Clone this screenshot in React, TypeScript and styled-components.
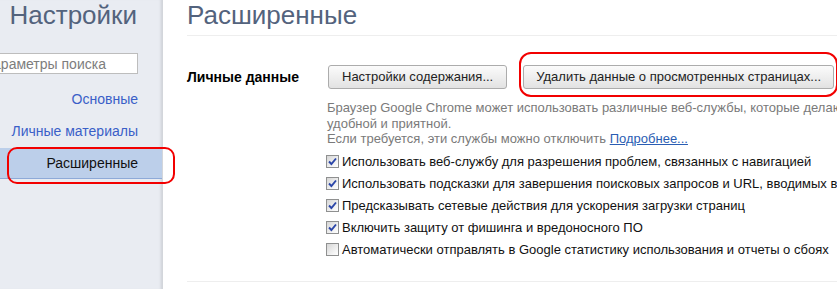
import React from "react";
import styled, { createGlobalStyle } from "styled-components";

const Global = createGlobalStyle`
  html, body { margin: 0; padding: 0; background: #fff; }
  body { font-family: "Liberation Sans", Arial, sans-serif; font-size: 13px; color: #000; }
  * { box-sizing: border-box; }
`;

const Page = styled.div`
  display: flex;
  width: 837px;
  height: 289px;
  overflow: hidden;
  position: relative;
`;

const Sidebar = styled.div`
  flex: 0 0 163px;
  background: #e9ecf2;
  border-right: 1px solid #d3d6db;
  box-shadow: inset -3px 0 3px -2px rgba(0, 0, 0, 0.12);
  text-align: right;
  position: relative;
  z-index: 2;
`;

const SideTitle = styled.h1`
  margin: 0;
  padding-right: 25px;
  font-weight: normal;
  font-size: 26px;
  line-height: 30px;
  color: #53637d;
`;

const SearchBox = styled.input`
  display: block;
  margin: 23px 0 0 -21px;
  width: 159px;
  height: 21px;
  border: 1px solid #bdbdbd;
  background: #fff;
  padding: 0 3px;
  font-family: "Liberation Sans", Arial, sans-serif;
  font-size: 14px;
  outline: none;
  &::placeholder { color: #7d7d7d; }
`;

const Nav = styled.div`
  margin-top: 10px;
`;

const NavItem = styled.div<{ $active?: boolean }>`
  position: relative;
  height: 31px;
  line-height: 30px;
  margin-bottom: 1px;
  padding-right: 24px;
  font-size: 14px;
  color: ${(p) => (p.$active ? "#111" : "#3a5fc8")};
  background: ${(p) => (p.$active ? "#bccfea" : "transparent")};
  border-bottom: 1px solid ${(p) => (p.$active ? "#8eaad8" : "transparent")};
`;

const Ring = styled.div<{ $r: number }>`
  position: absolute;
  border: 2px solid #f20000;
  border-radius: ${(p) => p.$r}px;
  pointer-events: none;
  z-index: 3;
`;

const SideRing = styled(Ring)`
  left: 7px;
  top: -1px;
  width: 168px;
  height: 37px;
`;

const Main = styled.div`
  flex: 1;
  padding-left: 24px;
  min-width: 0;
`;

const Header = styled.h2`
  margin: 0;
  height: 36px;
  font-weight: normal;
  font-size: 26px;
  line-height: 30px;
  color: #53637d;
  border-bottom: 1px solid #eeeeee;
`;

const Section = styled.div`
  display: flex;
  align-items: flex-start;
  padding-top: 29px;
  padding-bottom: 20px;
  border-bottom: 1px solid #eeeeee;
`;

const Label = styled.div`
  flex: 0 0 141px;
  font-weight: bold;
  font-size: 14px;
  line-height: 24px;
`;

const Body = styled.div`
  flex: 1;
  min-width: 0;
`;

const Buttons = styled.div`
  display: flex;
  gap: 16px;
`;

const BtnWrap = styled.div`
  position: relative;
`;

const Button = styled.button<{ $pad: number }>`
  height: 24px;
  padding: 0 ${(p) => p.$pad}px;
  border: 1px solid #acacac;
  border-radius: 3px;
  background: linear-gradient(#fbfbfb, #ececec 60%, #e2e2e2);
  font-family: "Liberation Sans", Arial, sans-serif;
  font-size: 13px;
  color: #222;
  white-space: nowrap;
  line-height: 22px;
`;

const BtnRing = styled(Ring)`
  left: -4px;
  right: -4px;
  top: -13px;
  bottom: -8px;
`;

const Desc = styled.div`
  margin-top: 11px;
  margin-left: -1px;
  color: #7a7a7a;
  line-height: 15.5px;
  white-space: nowrap;
`;

const Link = styled.a`
  color: #2a5db3;
  text-decoration: underline;
`;

const Options = styled.div`
  margin-top: 4px;
  margin-left: -2px;
`;

const Option = styled.label`
  display: flex;
  align-items: center;
  height: 22px;
  white-space: nowrap;
  color: #111;
`;

const Box = styled.span`
  flex: 0 0 13px;
  width: 13px;
  height: 13px;
  margin-right: 3px;
  border: 1px solid #8f9090;
  background: linear-gradient(135deg, #d6d6d6, #f4f4f4 70%, #fff);
  display: inline-flex;
  align-items: center;
  justify-content: center;
`;

const Check = () => (
  <svg width="9" height="9" viewBox="0 0 9 9">
    <path d="M1 4.5 L3.4 7 L8 1.5" fill="none" stroke="#2b46a8" strokeWidth="1.9" />
  </svg>
);

const options: { text: string; checked: boolean }[] = [
  { text: "Использовать веб-службу для разрешения проблем, связанных с навигацией", checked: true },
  { text: "Использовать подсказки для завершения поисковых запросов и URL, вводимых в адресную строку", checked: true },
  { text: "Предсказывать сетевые действия для ускорения загрузки страниц", checked: true },
  { text: "Включить защиту от фишинга и вредоносного ПО", checked: true },
  { text: "Автоматически отправлять в Google статистику использования и отчеты о сбоях", checked: false },
];

export default function App() {
  return (
    <>
      <Global />
      <Page>
        <Sidebar>
          <SideTitle>Настройки</SideTitle>
          <SearchBox placeholder="Параметры поиска" />
          <Nav>
            <NavItem>Основные</NavItem>
            <NavItem>Личные материалы</NavItem>
            <NavItem $active>
              Расширенные
              <SideRing $r={10} />
            </NavItem>
          </Nav>
        </Sidebar>
        <Main>
          <Header>Расширенные</Header>
          <Section>
            <Label>Личные данные</Label>
            <Body>
              <Buttons>
                <BtnWrap>
                  <Button $pad={13}>Настройки содержания...</Button>
                </BtnWrap>
                <BtnWrap>
                  <Button $pad={12}>Удалить данные о просмотренных страницах...</Button>
                  <BtnRing $r={12} />
                </BtnWrap>
              </Buttons>
              <Desc>
                Браузер Google Chrome может использовать различные веб-службы, которые делают работу в Интернете более
                <br />
                удобной и приятной.
                <br />
                Если требуется, эти службы можно отключить <Link href="#">Подробнее...</Link>
              </Desc>
              <Options>
                {options.map((o) => (
                  <Option key={o.text}>
                    <Box>{o.checked && <Check />}</Box>
                    {o.text}
                  </Option>
                ))}
              </Options>
            </Body>
          </Section>
        </Main>
      </Page>
    </>
  );
}
